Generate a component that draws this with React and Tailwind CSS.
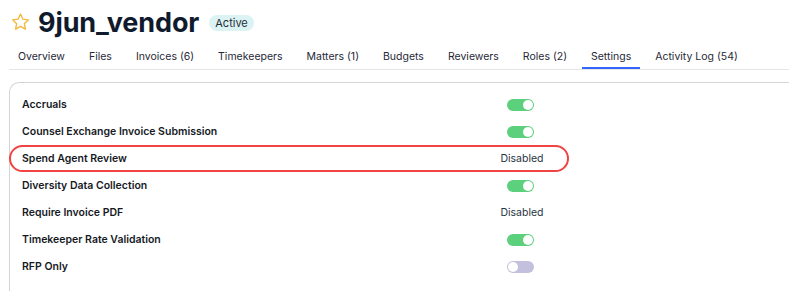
import React from "react";

const tabs = [
  "Overview",
  "Files",
  "Invoices (6)",
  "Timekeepers",
  "Matters (1)",
  "Budgets",
  "Reviewers",
  "Roles (2)",
  "Settings",
  "Activity Log (54)",
];

const rows = [
  { label: "Accruals", value: "on" },
  { label: "Counsel Exchange Invoice Submission", value: "on" },
  { label: "Spend Agent Review", value: "disabled", highlight: true },
  { label: "Diversity Data Collection", value: "on" },
  { label: "Require Invoice PDF", value: "disabled" },
  { label: "Timekeeper Rate Validation", value: "on" },
  { label: "RFP Only", value: "off" },
];

function Toggle({ on }) {
  return (
    <div
      className={
        on
          ? "mr-[3px] w-[27px] h-[12px] rounded-full bg-[#5cd07c] flex items-center justify-end px-[1px]"
          : "mr-[3px] w-[27px] h-[12px] rounded-full bg-[#c2c0dc] flex items-center justify-start px-[1px]"
      }
    >
      <div className="w-[10px] h-[10px] rounded-full bg-white" />
    </div>
  );
}

export default function App() {
  return (
    <div
      className="w-[789px] h-[291px] bg-white overflow-hidden"
      style={{ fontFamily: "Inter, 'Noto Sans', sans-serif" }}
    >
      <div className="flex items-center pl-[10px] pt-[8px] h-[36px]">
        <svg width="21" height="20" viewBox="0 0 24 24" fill="none" stroke="#f3b73b" strokeWidth="1.6" strokeLinejoin="round">
          <path d="M12 2.5l2.9 6.1 6.6.8-4.9 4.6 1.3 6.6L12 17.3l-5.9 3.3 1.3-6.6-4.9-4.6 6.6-.8z" />
        </svg>
        <h1 className="ml-[7px] text-[27px] font-bold text-[#0f1b2d] leading-none tracking-[-0.1px]">9jun_vendor</h1>
        <span className="ml-[10px] mt-[2px] px-[6px] h-[16px] flex items-center rounded-full bg-[#dcf3f3] text-[11px] text-[#1f2d3a]">
          Active
        </span>
      </div>
      <div className="mt-[9px] ml-[9px] flex gap-[6px] border-b border-[#e6e6e6] h-[25px]">
        {tabs.map((t) => (
          <div
            key={t}
            className={
              t === "Settings"
                ? "px-[9px] text-[10.5px] text-[#1f2937] border-b-[2px] border-[#3366ff] leading-none pt-[7px] h-[24px]"
                : "px-[9px] text-[10.5px] text-[#1f2937] leading-none pt-[7px] h-[24px]"
            }
          >
            {t}
          </div>
        ))}
      </div>
      <div className="relative mt-[12px] ml-[9px] border-l border-t border-[#d4d4d4] rounded-tl-[10px] h-[300px] pt-[8px]">
        {rows.map((r) => (
          <div key={r.label} className="relative flex items-center h-[27px]">
            <div className="w-[472px] pl-[12px] text-[10.5px] font-semibold text-[#161a1f]">{r.label}</div>
            <div className="w-[80px] flex justify-center">
              {r.value === "disabled" ? (
                <span className="text-[10.5px] text-[#283341]">Disabled</span>
              ) : (
                <Toggle on={r.value === "on"} />
              )}
            </div>
            {r.highlight && (
              <div className="absolute left-[-1px] top-[0px] w-[560px] h-[27px] rounded-[14px] border-[2px] border-[#f04343]" />
            )}
          </div>
        ))}
      </div>
    </div>
  );
}
